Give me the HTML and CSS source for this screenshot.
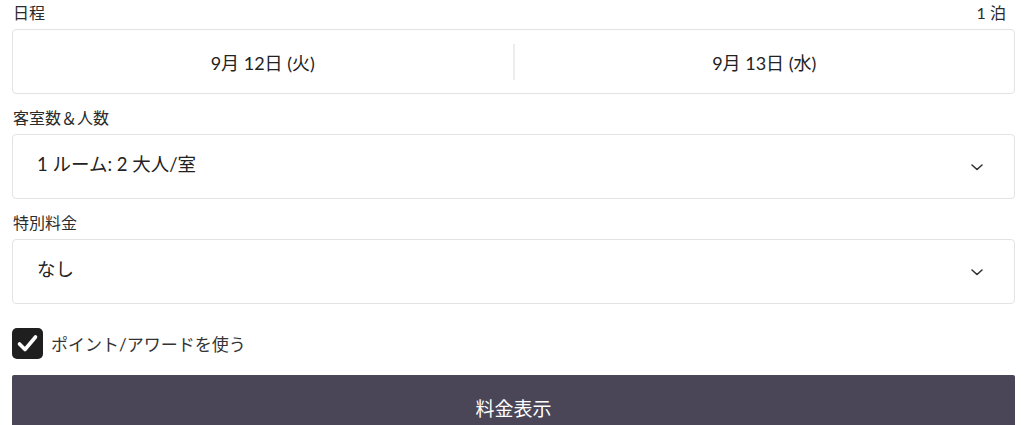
FILE: index.html
```html
<!DOCTYPE html>
<html lang="ja">
<head>
<meta charset="utf-8">
<link rel="stylesheet" href="styles.css">
</head>
<body>
<div class="form">
  <div class="field">
    <div class="label-row">
      <span class="label">日程</span>
      <span class="nights">1 泊</span>
    </div>
    <div class="box dates">
      <div class="date">9月 12日 (火)</div>
      <div class="divider"></div>
      <div class="date">9月 13日 (水)</div>
    </div>
  </div>
  <div class="field">
    <div class="label-row"><span class="label">客室数＆人数</span></div>
    <div class="box select">
      <span class="value">1 ルーム: 2 大人/室</span>
      <svg class="chev" width="14" height="10" viewBox="0 0 14 10"><path d="M2 3 L7 7.5 L12 3" fill="none" stroke="#333" stroke-width="1.6" stroke-linecap="round" stroke-linejoin="round"/></svg>
    </div>
  </div>
  <div class="field">
    <div class="label-row"><span class="label">特別料金</span></div>
    <div class="box select">
      <span class="value">なし</span>
      <svg class="chev" width="14" height="10" viewBox="0 0 14 10"><path d="M2 3 L7 7.5 L12 3" fill="none" stroke="#333" stroke-width="1.6" stroke-linecap="round" stroke-linejoin="round"/></svg>
    </div>
  </div>
  <label class="check">
    <span class="checkbox">
      <svg width="31" height="31" viewBox="0 0 31 31"><path d="M7.5 16 L13 21.5 L23.5 9" fill="none" stroke="#fff" stroke-width="3.6" stroke-linecap="round" stroke-linejoin="round"/></svg>
    </span>
    <span class="check-label">ポイント/アワードを使う</span>
  </label>
  <div class="button">料金表示</div>
</div>
</body>
</html>
```
FILE: styles.css
```css
html, body {
  margin: 0;
  padding: 0;
  background: #fff;
}
body {
  font-family: Lato, "Noto Sans CJK JP", sans-serif;
  color: #222;
  overflow: hidden;
}
.form {
  padding: 0 9px 0 12px;
}
.field {
  margin-bottom: 11px;
}
.label-row {
  display: flex;
  justify-content: space-between;
  align-items: center;
  height: 24px;
  margin-bottom: 5px;
  font-size: 16px;
  color: #2b2b2b;
}
.label-row .label {
  padding-left: 1px;
}
.nights {
  padding-right: 9px;
}
.box {
  box-sizing: border-box;
  height: 65px;
  border: 1px solid #e3e3e3;
  border-radius: 4px;
  display: flex;
  align-items: center;
  font-size: 18px;
  color: #222;
}
.dates .date {
  flex: 1;
  text-align: center;
}
.divider {
  width: 2px;
  height: 36px;
  background: #ececec;
}
.select {
  padding: 0 30px 0 24px;
  justify-content: space-between;
}
.select .value {
  font-size: 18.5px;
  padding-bottom: 7px;
}
.chev {
  display: block;
  margin-top: 0;
}
.check {
  display: flex;
  align-items: center;
  gap: 8px;
  margin-top: 24px;
  height: 31px;
}
.checkbox {
  width: 31px;
  height: 31px;
  background: #1f1f1f;
  border-radius: 5px;
  display: flex;
  align-items: center;
  justify-content: center;
}
.checkbox svg {
  display: block;
}
.check-label {
  font-size: 17px;
  color: #333;
}
.button {
  margin-top: 16px;
  height: 64px;
  background: #4a4658;
  color: #fff;
  font-size: 19px;
  display: flex;
  align-items: center;
  justify-content: center;
  border-radius: 2px;
}
```
